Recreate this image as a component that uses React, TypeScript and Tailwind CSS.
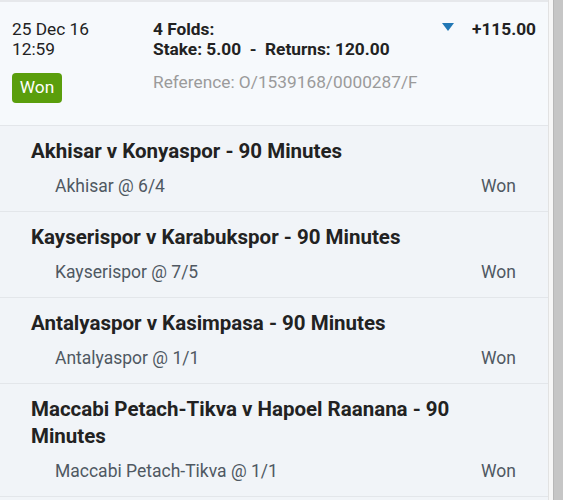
import React from 'react'

const legs = [
  { title: 'Akhisar v Konyaspor - 90 Minutes', pick: 'Akhisar @ 6/4', result: 'Won' },
  { title: 'Kayserispor v Karabukspor - 90 Minutes', pick: 'Kayserispor @ 7/5', result: 'Won' },
  { title: 'Antalyaspor v Kasimpasa - 90 Minutes', pick: 'Antalyaspor @ 1/1', result: 'Won' },
  {
    title: 'Maccabi Petach-Tikva v Hapoel Raanana - 90 Minutes',
    pick: 'Maccabi Petach-Tikva @ 1/1',
    result: 'Won',
  },
]

function BetHeader() {
  return (
    <div className="flex border-t-2 border-[#e6e8eb] bg-[#f6f9fc] pl-3 pr-3 pt-[17px] pb-[22px]">
      {/* date + status */}
      <div className="w-[141px] shrink-0">
        <div className="text-[17.3px] leading-5 text-[#222]">25 Dec 16</div>
        <div className="text-[17.3px] leading-5 text-[#222]">12:59</div>
        <div className="mt-[14px] inline-flex h-[30px] w-[50px] items-center justify-center rounded-[4px] bg-[#5a9e0c] text-[17.3px] text-white">
          Won
        </div>
      </div>

      {/* bet summary */}
      <div className="flex-1">
        <div className="text-[17.3px] font-bold leading-5 text-[#222]">4 Folds:</div>
        <div className="text-[17.3px] font-bold leading-5 text-[#222]">
          Stake: 5.00&nbsp; - &nbsp;Returns: 120.00
        </div>
        <div className="mt-[13px] text-[17.3px] leading-5 text-[#9b9b9b]">
          Reference: O/1539168/0000287/F
        </div>
      </div>

      {/* toggle + profit */}
      <div className="flex items-start">
        <svg width="12" height="8" viewBox="0 0 12 8" className="mt-[4px] mr-[18px]">
          <polygon points="0,0 12,0 6,8" fill="#2278b5" />
        </svg>
        <div className="text-[17.3px] font-bold leading-5 text-[#222]">+115.00</div>
      </div>
    </div>
  )
}

function LegRow({ title, pick, result }: { title: string; pick: string; result: string }) {
  return (
    <div className="border-t border-[#e3e6ea] bg-[#f1f4f8] pl-[31px] pr-[32px] pt-3 pb-[13px]">
      <div className="text-[20.5px] font-bold leading-[27px] text-[#222]">{title}</div>
      <div className="mt-[9px] flex justify-between pl-6 text-[17.5px] leading-6 text-[#4f5862]">
        <span>{pick}</span>
        <span>{result}</span>
      </div>
    </div>
  )
}

export default function App() {
  return (
    <div
      className="flex h-[500px] w-[563px] overflow-hidden bg-white"
      style={{ fontFamily: 'Roboto, "Noto Sans", sans-serif' }}
    >
      <div className="w-[548px] shrink-0">
        <BetHeader />
        {legs.map((leg) => (
          <LegRow key={leg.title} {...leg} />
        ))}
        <div className="border-t border-[#e3e6ea] bg-[#f1f4f8] h-10" />
      </div>
      <div className="w-[5px] shrink-0 border-l border-[#e2e2e2] bg-[#f7f7f7]" />
      <div className="flex-1 border-l border-[#b8b8b8] bg-[#c6c6c6]" />
    </div>
  )
}
